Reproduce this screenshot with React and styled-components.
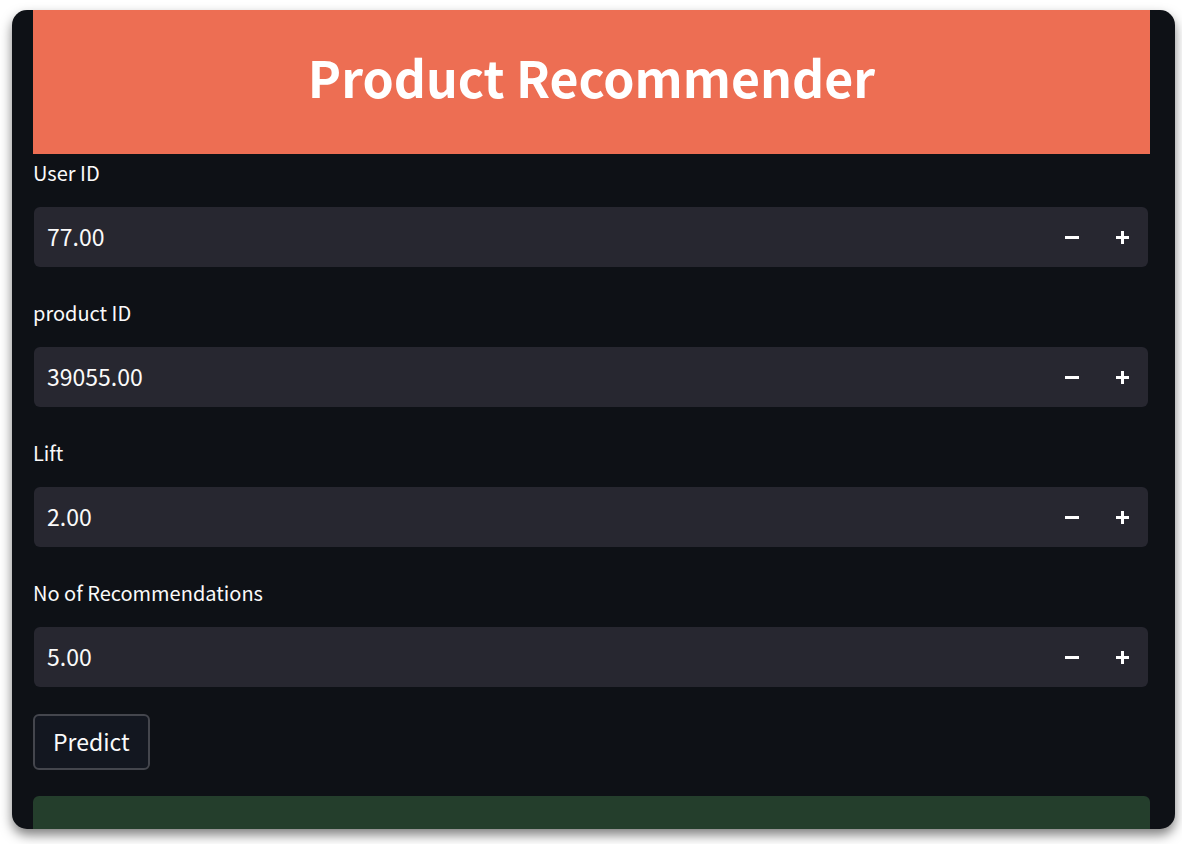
import React, { useState } from "react";
import styled, { createGlobalStyle } from "styled-components";

const GlobalStyle = createGlobalStyle`
  *, *::before, *::after { box-sizing: border-box; }
  body {
    margin: 0;
    background: #ffffff;
    color: #fafafa;
    font-family: "Noto Sans CJK SC", "Noto Sans", sans-serif;
  }
  button, input { font: inherit; color: inherit; }
`;

const Page = styled.div`
  display: flex;
  min-height: 100vh;
  padding: 10px 7px 15px 12px;
`;

const Card = styled.main`
  flex: 1;
  min-width: 0;
  display: flex;
  flex-direction: column;
  padding: 0 25px 0 21px;
  overflow: hidden;
  border-radius: 15px;
  background: #0e1116;
  box-shadow: 0 6px 12px rgba(0, 0, 0, 0.5);
`;

const Banner = styled.header`
  padding: 28px 10px 40px;
  background: #ed6e53;
  text-align: center;
`;

const Title = styled.h1`
  margin: 0;
  color: #ffffff;
  font-size: 50px;
  font-weight: 700;
  line-height: 76px;
`;

const Form = styled.form`
  display: flex;
  flex-direction: column;
  align-items: stretch;
  gap: 27px;
  margin-bottom: 26px;
`;

const Field = styled.div`
  display: flex;
  flex-direction: column;
  gap: 15px;
`;

const Label = styled.label`
  font-size: 20px;
  line-height: 38px;
`;

const NumberBox = styled.div`
  display: flex;
  height: 60px;
  margin: 0 2px 0 1px;
  overflow: hidden;
  border-radius: 6px;
  background: #272730;
`;

const NumberInput = styled.input`
  flex: 1;
  min-width: 0;
  padding: 0 13px 2px;
  border: 0;
  outline: 0;
  background: transparent;
  font-size: 23px;
`;

const StepButton = styled.button`
  display: flex;
  align-items: center;
  justify-content: center;
  width: 51px;
  padding: 0;
  border: 0;
  background: transparent;
  cursor: pointer;
`;

const PredictButton = styled.button`
  align-self: flex-start;
  height: 56px;
  padding: 0 18px 2px;
  border: 2px solid #44464d;
  border-radius: 6px;
  background: #131720;
  font-size: 23px;
  line-height: 50px;
  cursor: pointer;
`;

const SuccessAlert = styled.div`
  flex: 1;
  min-height: 33px;
  border-radius: 6px 6px 0 0;
  background: #243e2c;
`;

function StepIcon({ plus }) {
  return (
    <svg width="15" height="15" viewBox="0 0 15 15" fill="#ffffff" aria-hidden="true">
      <rect x="1" y="6" width={plus ? 13 : 14} height="3" />
      {plus && <rect x="6" y="1" width="3" height="13" />}
    </svg>
  );
}

function NumberField({ id, label, initial }) {
  const [value, setValue] = useState(initial);
  const step = (by) => setValue(((Number(value) || 0) + by).toFixed(2));
  return (
    <Field>
      <Label htmlFor={id}>{label}</Label>
      <NumberBox>
        <NumberInput
          id={id}
          type="text"
          inputMode="decimal"
          value={value}
          onChange={(e) => setValue(e.target.value)}
        />
        <StepButton type="button" aria-label={`Decrease ${label}`} onClick={() => step(-0.01)}>
          <StepIcon />
        </StepButton>
        <StepButton type="button" aria-label={`Increase ${label}`} onClick={() => step(0.01)}>
          <StepIcon plus />
        </StepButton>
      </NumberBox>
    </Field>
  );
}

const FIELDS = [
  { id: "user-id", label: "User ID", initial: "77.00" },
  { id: "product-id", label: "product ID", initial: "39055.00" },
  { id: "lift", label: "Lift", initial: "2.00" },
  { id: "count", label: "No of Recommendations", initial: "5.00" },
];

export default function App() {
  return (
    <>
      <GlobalStyle />
      <Page>
        <Card>
          <Banner>
            <Title>Product Recommender</Title>
          </Banner>
          <Form onSubmit={(e) => e.preventDefault()}>
            {FIELDS.map((field) => (
              <NumberField key={field.id} {...field} />
            ))}
            <PredictButton type="submit">Predict</PredictButton>
          </Form>
          <SuccessAlert role="status" />
        </Card>
      </Page>
    </>
  );
}
